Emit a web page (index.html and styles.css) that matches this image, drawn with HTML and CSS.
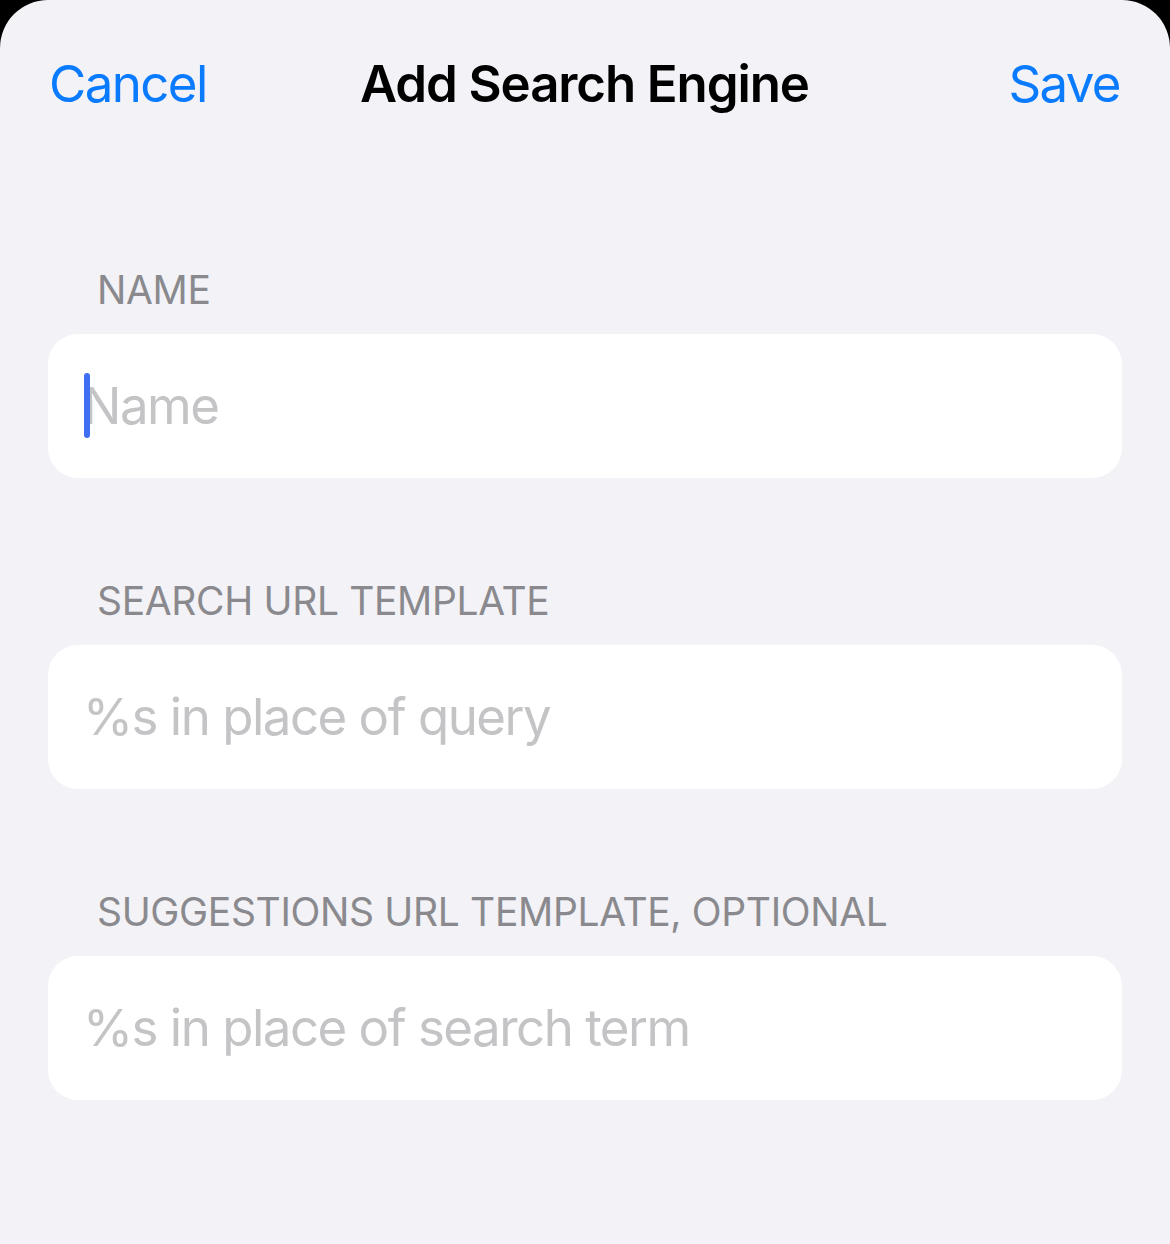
FILE: index.html
```html
<!DOCTYPE html>
<html lang="en">
<head>
<meta charset="utf-8">
<title>Add Search Engine</title>
<link rel="stylesheet" href="styles.css">
</head>
<body>
<div class="sheet">
  <header class="nav">
    <span class="nav-btn nav-left">Cancel</span>
    <h1 class="nav-title">Add Search Engine</h1>
    <span class="nav-btn nav-right">Save</span>
  </header>
  <main class="form">
    <section class="group">
      <div class="group-label">NAME</div>
      <div class="field">
        <span class="caret"></span>
        <span class="placeholder">Name</span>
      </div>
    </section>
    <section class="group">
      <div class="group-label">SEARCH URL TEMPLATE</div>
      <div class="field">
        <span class="placeholder">%s in place of query</span>
      </div>
    </section>
    <section class="group">
      <div class="group-label">SUGGESTIONS URL TEMPLATE, OPTIONAL</div>
      <div class="field">
        <span class="placeholder">%s in place of search term</span>
      </div>
    </section>
  </main>
</div>
</body>
</html>
```

FILE: styles.css
```css
* {
  box-sizing: border-box;
}

html, body {
  margin: 0;
  padding: 0;
  height: 100%;
}

body {
  background: #000000;
  font-family: Inter, "Noto Sans", "Liberation Sans", sans-serif;
  -webkit-font-smoothing: antialiased;
}

.sheet {
  min-height: 100%;
  background: #f2f2f7;
  border-radius: 48px 48px 0 0;
  overflow: hidden;
}

.nav {
  display: grid;
  grid-template-columns: 1fr auto 1fr;
  align-items: center;
  padding: 54px 50px 0 49px;
  height: 114px;
}

.nav-btn {
  color: #0a7bff;
  font-size: 51px;
  line-height: 60px;
  font-weight: 400;
  letter-spacing: -1.6px;
}

.nav-left {
  justify-self: start;
}

.nav-right {
  justify-self: end;
}

.nav-title {
  margin: 0;
  color: #000000;
  font-size: 51px;
  line-height: 60px;
  font-weight: 600;
  letter-spacing: -1.1px;
}

.form {
  display: flex;
  flex-direction: column;
  gap: 99px;
  padding: 152px 48px 0 48px;
}

.group {
  display: flex;
  flex-direction: column;
}

.group-label {
  color: #8a8a8e;
  font-size: 39px;
  line-height: 48px;
  padding-left: 49px;
  margin-bottom: 20px;
  letter-spacing: -0.35px;
}

.field {
  position: relative;
  display: flex;
  align-items: center;
  height: 144px;
  background: #ffffff;
  border-radius: 30px;
  padding-left: 35px;
}

.placeholder {
  color: #c4c4c7;
  font-size: 51px;
  line-height: 60px;
  letter-spacing: -1.5px;
}

.caret {
  position: absolute;
  left: 36px;
  top: 39px;
  width: 6px;
  height: 65px;
  border-radius: 3px;
  background: #3f6ef2;
}
```
